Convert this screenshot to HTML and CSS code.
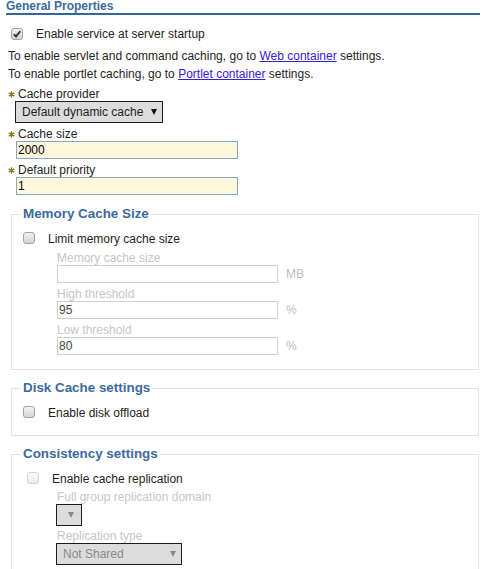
FILE: index.html
```html
<!DOCTYPE html>
<html lang="en">
<head>
    <meta charset="UTF-8">
    <meta name="viewport" content="width=device-width, initial-scale=1.0">
    <title>Dynamic cache service</title>
    <link rel="stylesheet" href="styles.css">
</head>
<body>
    <div class="panel">
        <h2 class="panel-title">General Properties</h2>

        <div class="check-row top-check">
            <span class="checkbox">
                <svg width="10" height="10" viewBox="0 0 10 10"><path d="M1.8 5.2L4 7.4L8.4 2.2" fill="none" stroke="#3c3c3c" stroke-width="2"/></svg>
            </span>
            <span>Enable service at server startup</span>
        </div>

        <p class="note">To enable servlet and command caching, go to <a href="#">Web container</a> settings.</p>
        <p class="note">To enable portlet caching, go to <a href="#">Portlet container</a> settings.</p>

        <div class="field">
            <label class="req">
                <svg width="7" height="7" viewBox="0 0 7 7"><path d="M3.5 0.3V6.7M0.7 1.9L6.3 5.1M0.7 5.1L6.3 1.9" stroke="#8a7718" stroke-width="1.3"/></svg>
                Cache provider
            </label>
            <div class="select provider">
                <span>Default dynamic cache</span>
                <span class="arrow"></span>
            </div>
        </div>

        <div class="field">
            <label class="req">
                <svg width="7" height="7" viewBox="0 0 7 7"><path d="M3.5 0.3V6.7M0.7 1.9L6.3 5.1M0.7 5.1L6.3 1.9" stroke="#8a7718" stroke-width="1.3"/></svg>
                Cache size
            </label>
            <input class="text-input" type="text" value="2000">
        </div>

        <div class="field">
            <label class="req">
                <svg width="7" height="7" viewBox="0 0 7 7"><path d="M3.5 0.3V6.7M0.7 1.9L6.3 5.1M0.7 5.1L6.3 1.9" stroke="#8a7718" stroke-width="1.3"/></svg>
                Default priority
            </label>
            <input class="text-input" type="text" value="1">
        </div>

        <fieldset class="group first">
            <legend>Memory Cache Size</legend>
            <div class="check-row">
                <span class="checkbox"></span>
                <span>Limit memory cache size</span>
            </div>
            <div class="sub">
                <label>Memory cache size</label>
                <div class="unit-row">
                    <input class="text-input off" type="text" value="" disabled>
                    <span class="unit">MB</span>
                </div>
            </div>
            <div class="sub">
                <label>High threshold</label>
                <div class="unit-row">
                    <input class="text-input off" type="text" value="95" disabled>
                    <span class="unit">%</span>
                </div>
            </div>
            <div class="sub">
                <label>Low threshold</label>
                <div class="unit-row">
                    <input class="text-input off" type="text" value="80" disabled>
                    <span class="unit">%</span>
                </div>
            </div>
        </fieldset>

        <fieldset class="group">
            <legend>Disk Cache settings</legend>
            <div class="check-row">
                <span class="checkbox"></span>
                <span>Enable disk offload</span>
            </div>
        </fieldset>

        <fieldset class="group">
            <legend>Consistency settings</legend>
            <div class="check-row indent">
                <span class="checkbox off"></span>
                <span>Enable cache replication</span>
            </div>
            <div class="sub tight">
                <label>Full group replication domain</label>
                <div class="select off domain">
                    <span class="arrow"></span>
                </div>
            </div>
            <div class="sub tight">
                <label>Replication type</label>
                <div class="select off repl">
                    <span>Not Shared</span>
                    <span class="arrow"></span>
                </div>
            </div>
        </fieldset>
    </div>
</body>
</html>
```

FILE: styles.css
```css
body {
    margin: 0;
    font-family: "Liberation Sans", Arial, sans-serif;
    font-size: 12px;
    color: #1e1e1e;
    background-color: white;
}
.panel {
    margin-left: 6px;
    width: 474px;
}
.panel-title {
    margin: 0;
    font-size: 12px;
    line-height: 13px;
    font-weight: bold;
    color: #3b6a9e;
    border-bottom: 2px solid #336699;
}
.check-row {
    display: flex;
    align-items: center;
    gap: 13px;
    line-height: 16px;
}
.top-check {
    margin-top: 11px;
    line-height: 17px;
}
.top-check .checkbox {
    margin-left: 5px;
}
.checkbox {
    display: flex;
    align-items: center;
    justify-content: center;
    width: 12px;
    height: 12px;
    margin: 0 0 2px 2px;
    box-sizing: border-box;
    border: 1px solid #a2a2a2;
    border-radius: 3px;
    background: linear-gradient(#f2f2f2, #d4d4d4);
}
.checkbox.off {
    border-color: #d2d2d2;
    background: linear-gradient(#fafafa, #ebebeb);
}
.indent .checkbox {
    margin-left: 6px;
}
.note {
    margin: 0;
    margin-left: 2px;
    line-height: 18px;
}
.top-check + .note {
    margin-top: 4px;
}
.note a {
    color: #3420d8;
}
.field {
    margin: 4px 0 0 10px;
}
.field label {
    display: flex;
    align-items: center;
    gap: 3px;
    margin-left: -8px;
    line-height: 14px;
}
.text-input {
    display: block;
    width: 222px;
    height: 18px;
    margin: 0;
    padding: 0 1px;
    box-sizing: border-box;
    border: 1px solid #86a6c6;
    background-color: #fff8dc;
    font-family: "Liberation Sans", Arial, sans-serif;
    font-size: 12px;
    color: #000;
}
.text-input.off {
    width: 221px;
    border-color: #cfcfcf;
    background-color: white;
    color: #444;
}
.select {
    display: flex;
    align-items: center;
    height: 22px;
    box-sizing: border-box;
    padding: 0 5px 0 6px;
    border: 1px solid #1c1c1c;
    background-color: #dcdcdc;
}
.select .arrow {
    margin-left: auto;
    width: 0;
    height: 0;
    border-left: 3.5px solid transparent;
    border-right: 3.5px solid transparent;
    border-top: 6px solid #111;
}
.select.provider {
    width: 148px;
    margin-left: -1px;
}
.select.off {
    color: #8a8a8a;
    margin-left: -1px;
}
.select.off .arrow {
    border-top-color: #888;
}
.select.domain {
    width: 26px;
    padding-right: 7px;
}
.select.repl {
    width: 126px;
}
.group {
    margin: 10px 1px 0 5px;
    padding: 9px 10px 14px 9px;
    border: 1px solid #e3e3e3;
}
.group.first {
    margin-top: 11px;
}
.group legend {
    padding: 0 2px;
    font-size: 13.4px;
    line-height: 16px;
    font-weight: bold;
    color: #3b6a9e;
}
.sub {
    margin: 4px 0 0 36px;
}
.sub.tight {
    margin-top: 3px;
}
.sub label {
    display: block;
    line-height: 14px;
    color: #c6c6c6;
}
.unit-row {
    display: flex;
    align-items: center;
    gap: 8px;
}
.unit {
    color: #bdbdbd;
}
```
